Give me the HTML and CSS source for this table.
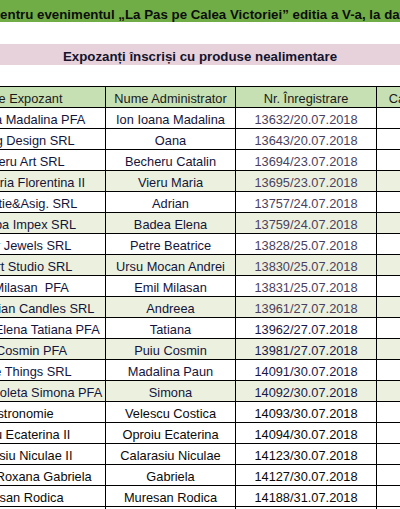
FILE: index.html
```html
<!DOCTYPE html>
<html lang="ro">
<head>
<meta charset="utf-8">
<title>Expozanți înscriși</title>
<link rel="stylesheet" href="styles.css">
</head>
<body>
<div class="sheet">
  <div class="title-bar"><span class="title-text">Lista expozanților înscriși pentru evenimentul „La Pas pe Calea Victoriei” editia a V-a, la data de 3-5 august 2018</span></div>
  <div class="gap-row tall"></div>
  <div class="sub-bar">Expozanți înscriși cu produse nealimentare</div>
  <div class="gap-row"></div>
  <table class="grid">
    <colgroup>
      <col class="w-exp"><col class="w-adm"><col class="w-nr"><col class="w-cat">
    </colgroup>
    <thead>
      <tr class="head"><th>Nume Expozant</th><th>Nume Administrator</th><th>Nr. Înregistrare</th><th>Categorie</th></tr>
    </thead>
    <tbody>
      <tr class="t1"><td>Ion Ioana Madalina PFA</td><td>Ion Ioana Madalina</td><td class="nr">13632/20.07.2018</td><td></td></tr>
      <tr class="t1"><td>Printing Design SRL</td><td>Oana</td><td class="nr">13643/20.07.2018</td><td></td></tr>
      <tr class="t1"><td>Becheru Art SRL</td><td>Becheru Catalin</td><td class="nr">13694/23.07.2018</td><td></td></tr>
      <tr class="t1 alt"><td>Vieru Maria Florentina II</td><td>Vieru Maria</td><td class="nr">13695/23.07.2018</td><td></td></tr>
      <tr class="t1"><td>Asistentie&amp;Asig. SRL</td><td>Adrian</td><td class="nr">13757/24.07.2018</td><td></td></tr>
      <tr class="t1 alt"><td>Colomba Impex SRL</td><td>Badea Elena</td><td class="nr">13759/24.07.2018</td><td></td></tr>
      <tr class="t1"><td>Amber Jewels SRL</td><td>Petre Beatrice</td><td class="nr">13828/25.07.2018</td><td></td></tr>
      <tr class="t1 alt"><td>Dan Art Studio SRL</td><td>Ursu Mocan Andrei</td><td class="nr">13830/25.07.2018</td><td></td></tr>
      <tr class="t1"><td>Emil Milasan  PFA</td><td>Emil Milasan</td><td class="nr">13831/25.07.2018</td><td></td></tr>
      <tr class="t1 alt"><td>Transilvanian Candles SRL</td><td>Andreea</td><td class="nr">13961/27.07.2018</td><td></td></tr>
      <tr class="t2"><td>Gheorghe Elena Tatiana PFA</td><td>Tatiana</td><td class="nr">13962/27.07.2018</td><td></td></tr>
      <tr class="t2 alt"><td>Puiu Cosmin PFA</td><td>Puiu Cosmin</td><td class="nr">13981/27.07.2018</td><td></td></tr>
      <tr class="t2"><td>Simple Things SRL</td><td>Madalina Paun</td><td class="nr">14091/30.07.2018</td><td></td></tr>
      <tr class="t2 alt"><td>Cristescu Violeta Simona PFA</td><td>Simona</td><td class="nr">14092/30.07.2018</td><td></td></tr>
      <tr class="t3"><td>Gastronomie</td><td>Velescu Costica</td><td class="nr">14093/30.07.2018</td><td></td></tr>
      <tr class="t3"><td>Oproiu Ecaterina II</td><td>Oproiu Ecaterina</td><td class="nr">14094/30.07.2018</td><td></td></tr>
      <tr class="t3"><td>Calarasiu Niculae II</td><td>Calarasiu Niculae</td><td class="nr">14123/30.07.2018</td><td></td></tr>
      <tr class="t3"><td>Popescu Roxana Gabriela</td><td>Gabriela</td><td class="nr">14127/30.07.2018</td><td></td></tr>
      <tr class="t3"><td>Muresan Rodica</td><td>Muresan Rodica</td><td class="nr">14188/31.07.2018</td><td></td></tr>
      <tr class="t3"><td></td><td></td><td></td><td></td></tr>
    </tbody>
  </table>
</div>
</body>
</html>
```
FILE: styles.css
```css
html, body {
  margin: 0;
  padding: 0;
  background: #ffffff;
}
body {
  overflow: hidden;
  font-family: "Liberation Sans", Arial, sans-serif;
  font-size: 12.8px;
  color: #111111;
}
.sheet {
  margin-left: -72px;
  width: 544px;
}
.title-bar {
  height: 22px;
  background: #70ad47;
  display: flex;
  align-items: flex-end;
  white-space: nowrap;
  font-weight: bold;
  font-size: 13.3px;
  color: #0d0d0d;
}
.title-text {
  margin-left: -103px;
  line-height: 15px;
  padding-bottom: 0;
}
.gap-row {
  height: 21px;
}
.gap-row.tall {
  height: 22px;
}
.sub-bar {
  height: 21px;
  background: #e7d2dc;
  font-weight: bold;
  font-size: 13.3px;
  text-align: center;
  line-height: 26px;
  overflow: hidden;
  color: #14142e;
  white-space: nowrap;
}
.grid {
  border-collapse: collapse;
  table-layout: fixed;
  width: 528px;
}
.w-exp { width: 177px; }
.w-adm { width: 130px; }
.w-nr { width: 141px; }
.w-cat { width: 80px; }
.grid th,
.grid td {
  border: 1px solid #000000;
  padding: 0 1px;
  height: 20px;
  text-align: center;
  vertical-align: bottom;
  line-height: 16px;
  white-space: pre;
  overflow: hidden;
  font-weight: normal;
}
.grid .head th {
  background: #c6e0b4;
  color: #1a1a1a;
}
.grid tr.alt td {
  background: #ebf1de;
}
.t1 td { color: #14143a; }
.t1 td.nr { color: #4a3f5e; }
.t2 td { color: #141440; }
.t2 td.nr { color: #18184a; }
.t3 td { color: #0a0a0a; }
.t3 td.nr { color: #0a0a0a; }
```
